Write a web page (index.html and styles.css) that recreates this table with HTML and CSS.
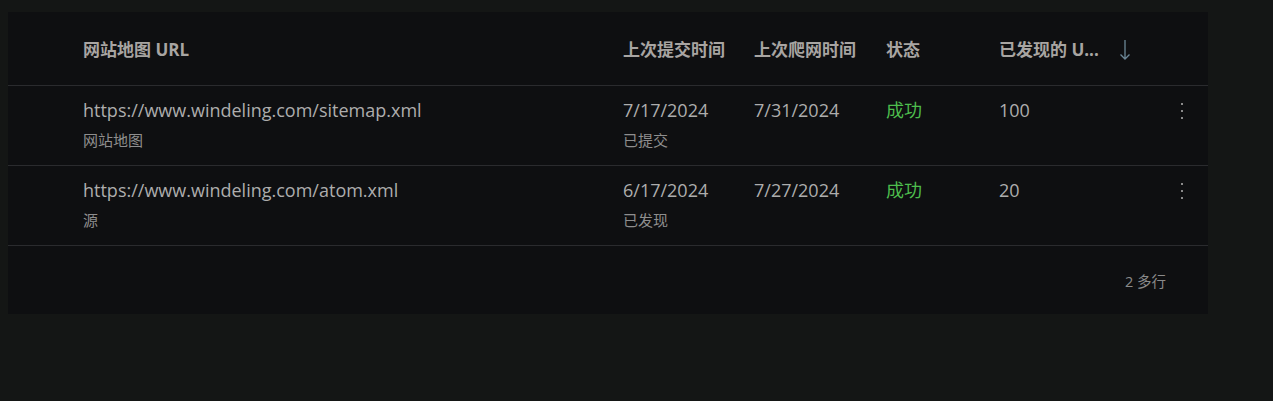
FILE: index.html
```html
<!DOCTYPE html>
<html lang="zh-CN">
<head>
    <meta charset="UTF-8">
    <title>站点地图</title>
    <link rel="stylesheet" href="styles.css">
</head>
<body>
    <div class="card">
        <div class="row head">
            <div class="cell">网站地图 URL</div>
            <div class="cell">上次提交时间</div>
            <div class="cell">上次爬网时间</div>
            <div class="cell">状态</div>
            <div class="cell sort">已发现的 U...
                <svg class="arrow" width="12" height="22" viewBox="0 0 12 22"><path d="M6 1v19M1.5 15.5l4.5 4.5 4.5-4.5" fill="none" stroke="currentColor" stroke-width="1.3"/></svg>
            </div>
            <div class="cell"></div>
        </div>

        <div class="row">
            <div class="cell">
                <div class="main">https://www.windeling.com/sitemap.xml</div>
                <div class="sub">网站地图</div>
            </div>
            <div class="cell">
                <div class="main">7/17/2024</div>
                <div class="sub">已提交</div>
            </div>
            <div class="cell"><div class="main">7/31/2024</div></div>
            <div class="cell"><div class="main ok">成功</div></div>
            <div class="cell"><div class="main">100</div></div>
            <div class="cell more"><span class="dots"><i></i><i></i><i></i></span></div>
        </div>

        <div class="row">
            <div class="cell">
                <div class="main">https://www.windeling.com/atom.xml</div>
                <div class="sub">源</div>
            </div>
            <div class="cell">
                <div class="main">6/17/2024</div>
                <div class="sub">已发现</div>
            </div>
            <div class="cell"><div class="main">7/27/2024</div></div>
            <div class="cell"><div class="main ok">成功</div></div>
            <div class="cell"><div class="main">20</div></div>
            <div class="cell more"><span class="dots"><i></i><i></i><i></i></span></div>
        </div>

        <div class="footer">2 多行</div>
    </div>
</body>
</html>
```

FILE: styles.css
```css
body {
    margin: 0;
    padding: 12px 8px;
    background-color: #141615;
    font-family: "Open Sans", "Noto Sans CJK SC", sans-serif;
    color: #ababab;
}
.card {
    width: 1200px;
    background-color: #0e0f11;
}
.row {
    display: grid;
    grid-template-columns: 540px 131px 132px 113px 160px 1fr;
    padding-left: 75px;
    height: 79px;
    border-bottom: 1px solid #2a2b2e;
}
.row.head {
    height: 73px;
    align-items: center;
    font-size: 17px;
    font-weight: bold;
    color: #a8a5a2;
}
.row .cell {
    padding-top: 11px;
}
.row.head .cell {
    padding-top: 0;
}
.sort {
    display: flex;
    align-items: center;
    gap: 20px;
}
.arrow {
    color: #6c8797;
    margin-top: 2px;
}
.main {
    font-size: 18px;
    line-height: 26px;
    color: #adadad;
}
.sub {
    margin-top: 6px;
    font-size: 15px;
    color: #8e8e8e;
}
.ok {
    color: #4dbd4d;
}
.more {
    display: flex;
    justify-content: flex-end;
    padding-right: 25px;
}
.dots {
    display: flex;
    flex-direction: column;
    gap: 5px;
    margin-top: 6px;
}
.dots i {
    width: 2px;
    height: 2px;
    background-color: #8a8a8a;
}
.footer {
    height: 68px;
    display: flex;
    align-items: center;
    justify-content: flex-end;
    padding-right: 42px;
    font-size: 14.5px;
    color: #8a8a8a;
}
```
